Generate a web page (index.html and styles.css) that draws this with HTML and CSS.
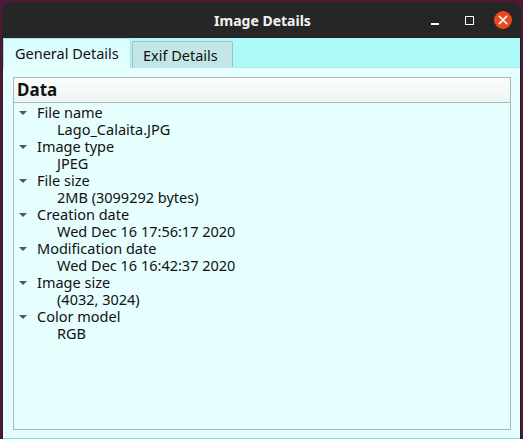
FILE: index.html
```html
<!DOCTYPE html>
<html>
<head>
<meta charset="utf-8">
<link rel="stylesheet" href="styles.css">
</head>
<body>
<div class="window">
  <div class="titlebar">
    <div class="title">Image Details</div>
    <div class="controls">
      <span class="min"></span>
      <span class="max"></span>
      <span class="close">
        <svg width="18" height="18" viewBox="0 0 18 18"><path d="M5.5 5.5 L12.5 12.5 M12.5 5.5 L5.5 12.5" stroke="#fff" stroke-width="1.6" stroke-linecap="square"/></svg>
      </span>
    </div>
  </div>
  <div class="body">
    <div class="tabs">
      <div class="tab active">General Details</div>
      <div class="tab">Exif Details</div>
    </div>
    <div class="pane">
      <div class="tree">
        <div class="header">Data</div>
        <div class="rows">
          <div class="row parent"><span class="arrow"></span>File name</div>
          <div class="row child">Lago_Calaita.JPG</div>
          <div class="row parent"><span class="arrow"></span>Image type</div>
          <div class="row child">JPEG</div>
          <div class="row parent"><span class="arrow"></span>File size</div>
          <div class="row child">2MB (3099292 bytes)</div>
          <div class="row parent"><span class="arrow"></span>Creation date</div>
          <div class="row child">Wed Dec 16 17:56:17 2020</div>
          <div class="row parent"><span class="arrow"></span>Modification date</div>
          <div class="row child">Wed Dec 16 16:42:37 2020</div>
          <div class="row parent"><span class="arrow"></span>Image size</div>
          <div class="row child">(4032, 3024)</div>
          <div class="row parent"><span class="arrow"></span>Color model</div>
          <div class="row child">RGB</div>
        </div>
      </div>
    </div>
  </div>
</div>
</body>
</html>
```
FILE: styles.css
```css
html, body {
  margin: 0;
  padding: 0;
}
body {
  width: 523px;
  height: 439px;
  background: #4e1836;
  font-family: "Noto Sans", "DejaVu Sans", sans-serif;
  overflow: hidden;
}
.window {
  margin: 2px 2px 0 2px;
  height: 437px;
  border-radius: 9px 9px 0 0;
  overflow: hidden;
  background: #232323;
  display: flex;
  flex-direction: column;
}
.titlebar {
  height: 36px;
  background: #262626;
  display: flex;
  align-items: center;
  justify-content: center;
  position: relative;
  flex-shrink: 0;
}
.title {
  color: #f2f2f2;
  font-weight: bold;
  font-size: 14px;
  margin-left: 2px;
}
.controls {
  position: absolute;
  right: 0;
  top: 0;
  height: 36px;
  display: flex;
  align-items: center;
}
.min {
  width: 8px;
  height: 1.5px;
  background: #fff;
  margin-top: 8px;
  margin-right: 26px;
}
.max {
  width: 7px;
  height: 7px;
  border: 1px solid #fff;
  margin-right: 20px;
}
.close {
  width: 18px;
  height: 18px;
  border-radius: 50%;
  background: #e9491f;
  margin-right: 9px;
  display: flex;
}
.body {
  flex: 1;
  background: #abf9f9;
  margin-left: 1px;
  margin-right: 1px;
  display: flex;
  flex-direction: column;
}
.tabs {
  display: flex;
  height: 29px;
  align-items: flex-end;
  flex-shrink: 0;
}
.tab {
  font-size: 14.5px;
  color: #111;
  box-sizing: border-box;
  border: 1px solid #a7c7c7;
  border-bottom: none;
  border-radius: 2px 2px 0 0;
}
.tab.active {
  width: 128px;
  height: 30px;
  margin-bottom: -1px;
  background: linear-gradient(#d9fcfc, #e5fefe);
  padding: 4px 0 0 11px;
  position: relative;
  z-index: 1;
  border-color: #b0dede;
}
.tab:not(.active) {
  width: 101px;
  height: 26px;
  margin-left: 1px;
  background: #c3e6e6;
  padding: 3px 0 0 10px;
  border-color: #9fc2c2;
}
.pane {
  flex: 1;
  background: #e5fefe;
  border-top: 1px solid #b8e6e6;
  border-bottom: 1px solid #7fdede;
  padding: 9px 9px 8px 10px;
  display: flex;
}
.tree {
  flex: 1;
  border: 1px solid #a9b9b9;
  background: #e6fefe;
  display: flex;
  flex-direction: column;
}
.header {
  height: 25px;
  box-sizing: border-box;
  border-bottom: 1px solid #a9b9b9;
  background: linear-gradient(#fcfdfd, #eef4f4);
  font-weight: bold;
  font-size: 17px;
  padding-left: 3px;
  line-height: 24px;
  color: #111;
}
.rows {
  padding-top: 1px;
}
.row {
  height: 17px;
  line-height: 17px;
  font-size: 14.5px;
  color: #111;
  display: flex;
  align-items: center;
}
.parent {
  padding-left: 23px;
  position: relative;
}
.child {
  padding-left: 43px;
}
.arrow {
  position: absolute;
  left: 5px;
  top: 7px;
  width: 0;
  height: 0;
  border-left: 4px solid transparent;
  border-right: 4px solid transparent;
  border-top: 4px solid #555;
}
```
